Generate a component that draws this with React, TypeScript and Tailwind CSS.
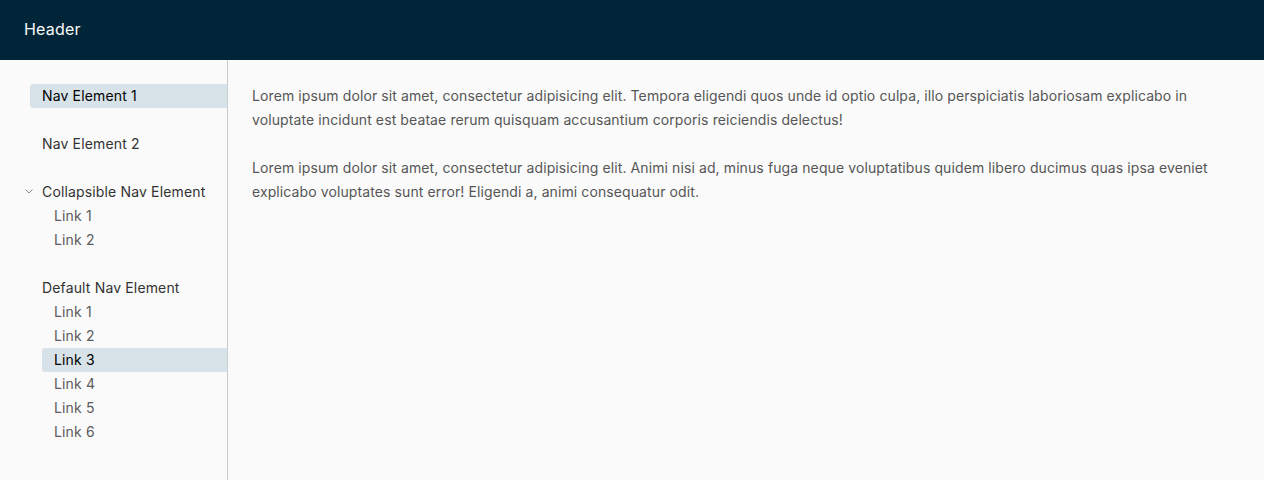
function Chevron() {
  return (
    <svg width="10" height="10" viewBox="0 0 10 10" className="text-[#8c8c8c]">
      <path d="M1.5 3.5 L5 7 L8.5 3.5" fill="none" stroke="currentColor" strokeWidth="1" />
    </svg>
  );
}

function NavLink({ label, active }: { label: string; active?: boolean }) {
  return (
    <div
      className={
        "h-6 flex items-center pl-3 pb-px rounded-l-[3px] " +
        (active ? "bg-[#d8e3e9] text-black" : "text-[#5c5c5c]")
      }
    >
      {label}
    </div>
  );
}

export default function App() {
  const links = ["Link 1", "Link 2", "Link 3", "Link 4", "Link 5", "Link 6"];
  return (
    <div className="h-[480px] flex flex-col bg-[#fafafa] overflow-hidden" style={{ fontFamily: "Inter, 'Noto Sans', sans-serif" }}>
      <header className="h-[60px] shrink-0 bg-[#002538] flex items-center px-6 pb-0.5">
        <span className="text-[16px] text-[#fafafa] font-normal tracking-[0.2px]">Header</span>
      </header>
      <div className="flex flex-1 min-h-0">
        <nav className="w-[228px] shrink-0 border-r border-[#cccccc] pt-6 pl-[30px] text-[14px] tracking-[0.15px] flex flex-col gap-6">
          <div className="h-6 flex items-center pl-3 pb-px rounded-l-[3px] bg-[#d8e3e9] text-black">Nav Element 1</div>
          <div className="h-6 flex items-center pl-3 pb-px text-[#333333]">Nav Element 2</div>
          <div>
            <div className="h-6 flex items-center text-[#333333] relative pl-3 pb-px">
              <span className="absolute -left-[6px] top-[6px]">
                <Chevron />
              </span>
              Collapsible Nav Element
            </div>
            <div className="pl-3">
              <NavLink label="Link 1" />
              <NavLink label="Link 2" />
            </div>
          </div>
          <div>
            <div className="h-6 flex items-center pl-3 pb-px text-[#333333]">Default Nav Element</div>
            <div className="pl-3">
              {links.map((l) => (
                <NavLink key={l} label={l} active={l === "Link 3"} />
              ))}
            </div>
          </div>
        </nav>
        <main className="flex-1 px-6 pt-6 text-[14px] leading-6 tracking-[0.1px] text-[#565656]">
          <p>
            Lorem ipsum dolor sit amet, consectetur adipisicing elit. Tempora eligendi quos unde id optio culpa, illo perspiciatis laboriosam explicabo in voluptate incidunt est beatae rerum quisquam accusantium corporis reiciendis delectus!
          </p>
          <p className="mt-6">
            Lorem ipsum dolor sit amet, consectetur adipisicing elit. Animi nisi ad, minus fuga neque voluptatibus quidem libero ducimus quas ipsa eveniet explicabo voluptates sunt error! Eligendi a, animi consequatur odit.
          </p>
        </main>
      </div>
    </div>
  );
}
